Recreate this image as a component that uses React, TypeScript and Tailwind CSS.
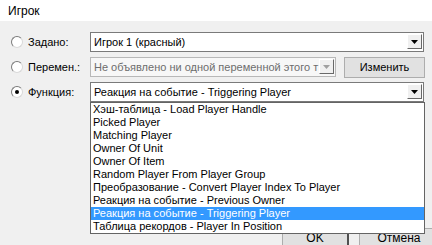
import React from 'react';

const items = [
  'Хэш-таблица - Load Player Handle',
  'Picked Player',
  'Matching Player',
  'Owner Of Unit',
  'Owner Of Item',
  'Random Player From Player Group',
  'Преобразование - Convert Player Index To Player',
  'Реакция на событие - Previous Owner',
  'Реакция на событие - Triggering Player',
  'Таблица рекордов - Player In Position',
];

function Arrow({ disabled }: { disabled?: boolean }) {
  return (
    <div className="w-[15px] h-[15px] my-[1px] mr-[1px] flex items-center justify-center bg-[#f0f0f0] border border-t-white border-l-white border-r-[#696969] border-b-[#696969]">
      <svg width="7" height="4" viewBox="0 0 7 4">
        <path d="M0 0h7L3.5 4z" fill={disabled ? '#a0a0a0' : '#000'} />
      </svg>
    </div>
  );
}

function Radio({ checked }: { checked?: boolean }) {
  return (
    <div className="w-[12px] h-[12px] rounded-full border border-t-[#7a7a7a] border-l-[#7a7a7a] border-r-[#d8d8d8] border-b-[#d8d8d8] bg-white flex items-center justify-center">
      {checked && <div className="w-[4px] h-[4px] rounded-full bg-black" />}
    </div>
  );
}

export default function App() {
  return (
    <div className="w-[432px] h-[245px] flex overflow-hidden text-[11px] text-black" style={{ fontFamily: '"Liberation Sans", Arial, sans-serif' }}>
      {/* Background window peeking through */}
      <div className="w-[2px] bg-[#dcdcdc] flex flex-col">
        <div className="h-[78px]" />
        <div className="h-[6px] bg-[#444]" />
        <div className="h-[12px]" />
        <div className="h-[5px] bg-[#555]" />
      </div>
      <div className="w-px bg-[#33cc66]" />

      {/* Dialog */}
      <div className="flex-1 flex flex-col">
        <div className="h-[21px] bg-white flex items-center pl-[8px] text-[12px]">Игрок</div>

        <div className="flex-1 relative bg-[#f0f0f0] overflow-hidden">
          <div className="flex flex-col gap-[5px] pt-[11px]">
            <div className="h-[20px] flex items-center">
              <div className="w-[28px] pl-[11px]"><Radio /></div>
              <div className="w-[62px]">Задано:</div>
              <div className="w-[334px] h-[20px] flex items-stretch bg-white border border-[#7a7a7a]">
                <div className="flex-1 pl-[3px] flex items-center">Игрок 1 (красный)</div>
                <Arrow />
              </div>
            </div>

            <div className="h-[20px] flex items-center">
              <div className="w-[28px] pl-[11px]"><Radio /></div>
              <div className="w-[62px]">Перемен.:</div>
              <div className="w-[246px] h-[20px] flex items-stretch bg-[#f7f7f7] border border-[#b8b8b8]">
                <div className="flex-1 pl-[3px] flex items-center text-[#6d6d6d] overflow-hidden whitespace-nowrap">
                  Не объявлено ни одной переменной этого т
                </div>
                <Arrow disabled />
              </div>
              <button className="ml-[8px] w-[81px] h-[21px] bg-[#e1e1e1] border border-[#adadad] flex items-center justify-center">
                Изменить
              </button>
            </div>

            <div className="h-[20px] flex items-center">
              <div className="w-[28px] pl-[11px]"><Radio checked /></div>
              <div className="w-[62px]">Функция:</div>
              <div className="w-[334px] h-[20px] flex items-stretch bg-white border border-[#7a7a7a]">
                <div className="flex-1 pl-[3px] flex items-center">Реакция на событие - Triggering Player</div>
                <Arrow />
              </div>
            </div>
          </div>

          {/* Bottom buttons, partly hidden by the open list */}
          <div className="mt-[126px] flex">
            <div className="ml-[282px] w-[67px] h-[17px] bg-[#e1e1e1] border border-b-0 border-[#adadad] border-r-2 border-r-[#505050] flex items-end justify-center pb-[1px] text-[12px] leading-[11px]">
              OK
            </div>
            <div className="ml-[10px] w-[80px] h-[17px] bg-[#e1e1e1] border border-b-0 border-[#adadad] flex items-end justify-center pb-[1px] text-[12px] leading-[11px]">
              Отмена
            </div>
          </div>

          {/* Open dropdown list */}
          <div className="absolute left-[90px] top-[81px] w-[335px] h-[132px] bg-white border border-[#646464] flex flex-col">
            {items.map((it, i) => (
              <div
                key={it}
                className={`h-[13px] leading-[13px] pl-[2px] whitespace-nowrap ${i === 8 ? 'bg-[#3399ff] text-white' : ''}`}
              >
                {it}
              </div>
            ))}
          </div>
        </div>
      </div>
    </div>
  );
}
